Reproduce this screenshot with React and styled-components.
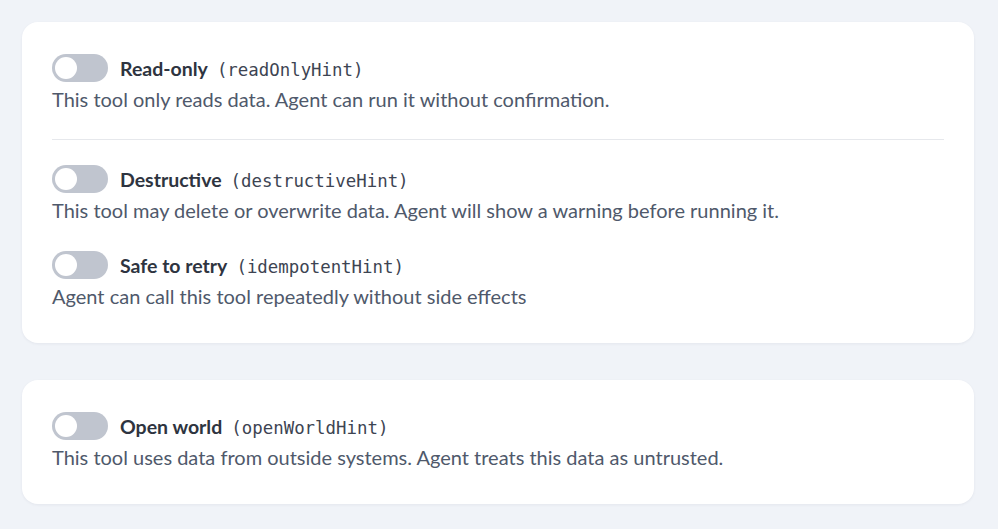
import React, { useState } from 'react';
import styled, { createGlobalStyle } from 'styled-components';

const hints = [
  {
    group: 'read',
    items: [
      {
        key: 'readOnlyHint',
        label: 'Read-only',
        text: 'This tool only reads data. Agent can run it without confirmation.',
      },
    ],
  },
  {
    group: 'write',
    items: [
      {
        key: 'destructiveHint',
        label: 'Destructive',
        text: 'This tool may delete or overwrite data. Agent will show a warning before running it.',
      },
      {
        key: 'idempotentHint',
        label: 'Safe to retry',
        text: 'Agent can call this tool repeatedly without side effects',
      },
    ],
  },
];

const GlobalStyle = createGlobalStyle`
  html, body {
    margin: 0;
    padding: 0;
    background: #f0f3f8;
  }
  body {
    font-family: Lato, "Noto Sans", sans-serif;
    -webkit-font-smoothing: antialiased;
  }
`;

const Page = styled.div`
  display: flex;
  flex-direction: column;
  gap: 37px;
  padding: 22px 24px 26px 22px;
`;

const Card = styled.section`
  background: #ffffff;
  border-radius: 16px;
  padding: 32px 30px 34px;
  box-shadow: 0 1px 3px rgba(30, 40, 70, 0.06);
  display: flex;
  flex-direction: column;
`;

const Group = styled.div`
  display: flex;
  flex-direction: column;
  gap: 28px;
`;

const Divider = styled.hr`
  border: none;
  border-top: 1px solid #e6e8ec;
  margin: 27px 0 25px;
`;

const Option = styled.div`
  display: flex;
  flex-direction: column;
  gap: 4px;
`;

const Header = styled.label`
  display: flex;
  align-items: center;
  gap: 12px;
  height: 28px;
  cursor: pointer;
`;

const Track = styled.button`
  position: relative;
  width: 56px;
  height: 28px;
  border: none;
  border-radius: 14px;
  padding: 0;
  background: ${(p) => (p.$on ? '#3b6fe0' : '#c0c5cf')};
  cursor: pointer;
  flex-shrink: 0;
`;

const Knob = styled.span`
  position: absolute;
  top: 3px;
  left: ${(p) => (p.$on ? '31px' : '3px')};
  width: 22px;
  height: 22px;
  border-radius: 50%;
  background: #ffffff;
  transition: left 0.15s;
`;

const Title = styled.span`
  font-size: 19.5px;
  font-weight: 700;
  color: #2e3440;
`;

const Code = styled.code`
  font-family: "DejaVu Sans Mono", "Liberation Mono", monospace;
  font-size: 17.4px;
  color: #3d4452;
  margin-left: 9px;
`;

const Description = styled.p`
  margin: 0;
  font-size: 20px;
  line-height: 26px;
  color: #4f596b;
`;

const Toggle = ({ on, onChange }) => (
  <Track type="button" $on={on} onClick={onChange}>
    <Knob $on={on} />
  </Track>
);

const HintOption = ({ item, on, onToggle }) => (
  <Option>
    <Header>
      <Toggle on={on} onChange={onToggle} />
      <span>
        <Title>{item.label}</Title>
        <Code>({item.key})</Code>
      </span>
    </Header>
    <Description>{item.text}</Description>
  </Option>
);

const App = () => {
  const [state, setState] = useState({});
  const flip = (key) => setState((s) => ({ ...s, [key]: !s[key] }));

  return (
    <>
      <GlobalStyle />
      <Page>
        <Card>
          {hints.map((g, i) => (
            <React.Fragment key={g.group}>
              {i > 0 && <Divider />}
              <Group>
                {g.items.map((item) => (
                  <HintOption
                    key={item.key}
                    item={item}
                    on={!!state[item.key]}
                    onToggle={() => flip(item.key)}
                  />
                ))}
              </Group>
            </React.Fragment>
          ))}
        </Card>
        <Card>
          <HintOption
            item={{
              key: 'openWorldHint',
              label: 'Open world',
              text: 'This tool uses data from outside systems. Agent treats this data as untrusted.',
            }}
            on={!!state.openWorldHint}
            onToggle={() => flip('openWorldHint')}
          />
        </Card>
      </Page>
    </>
  );
};

export default App;
